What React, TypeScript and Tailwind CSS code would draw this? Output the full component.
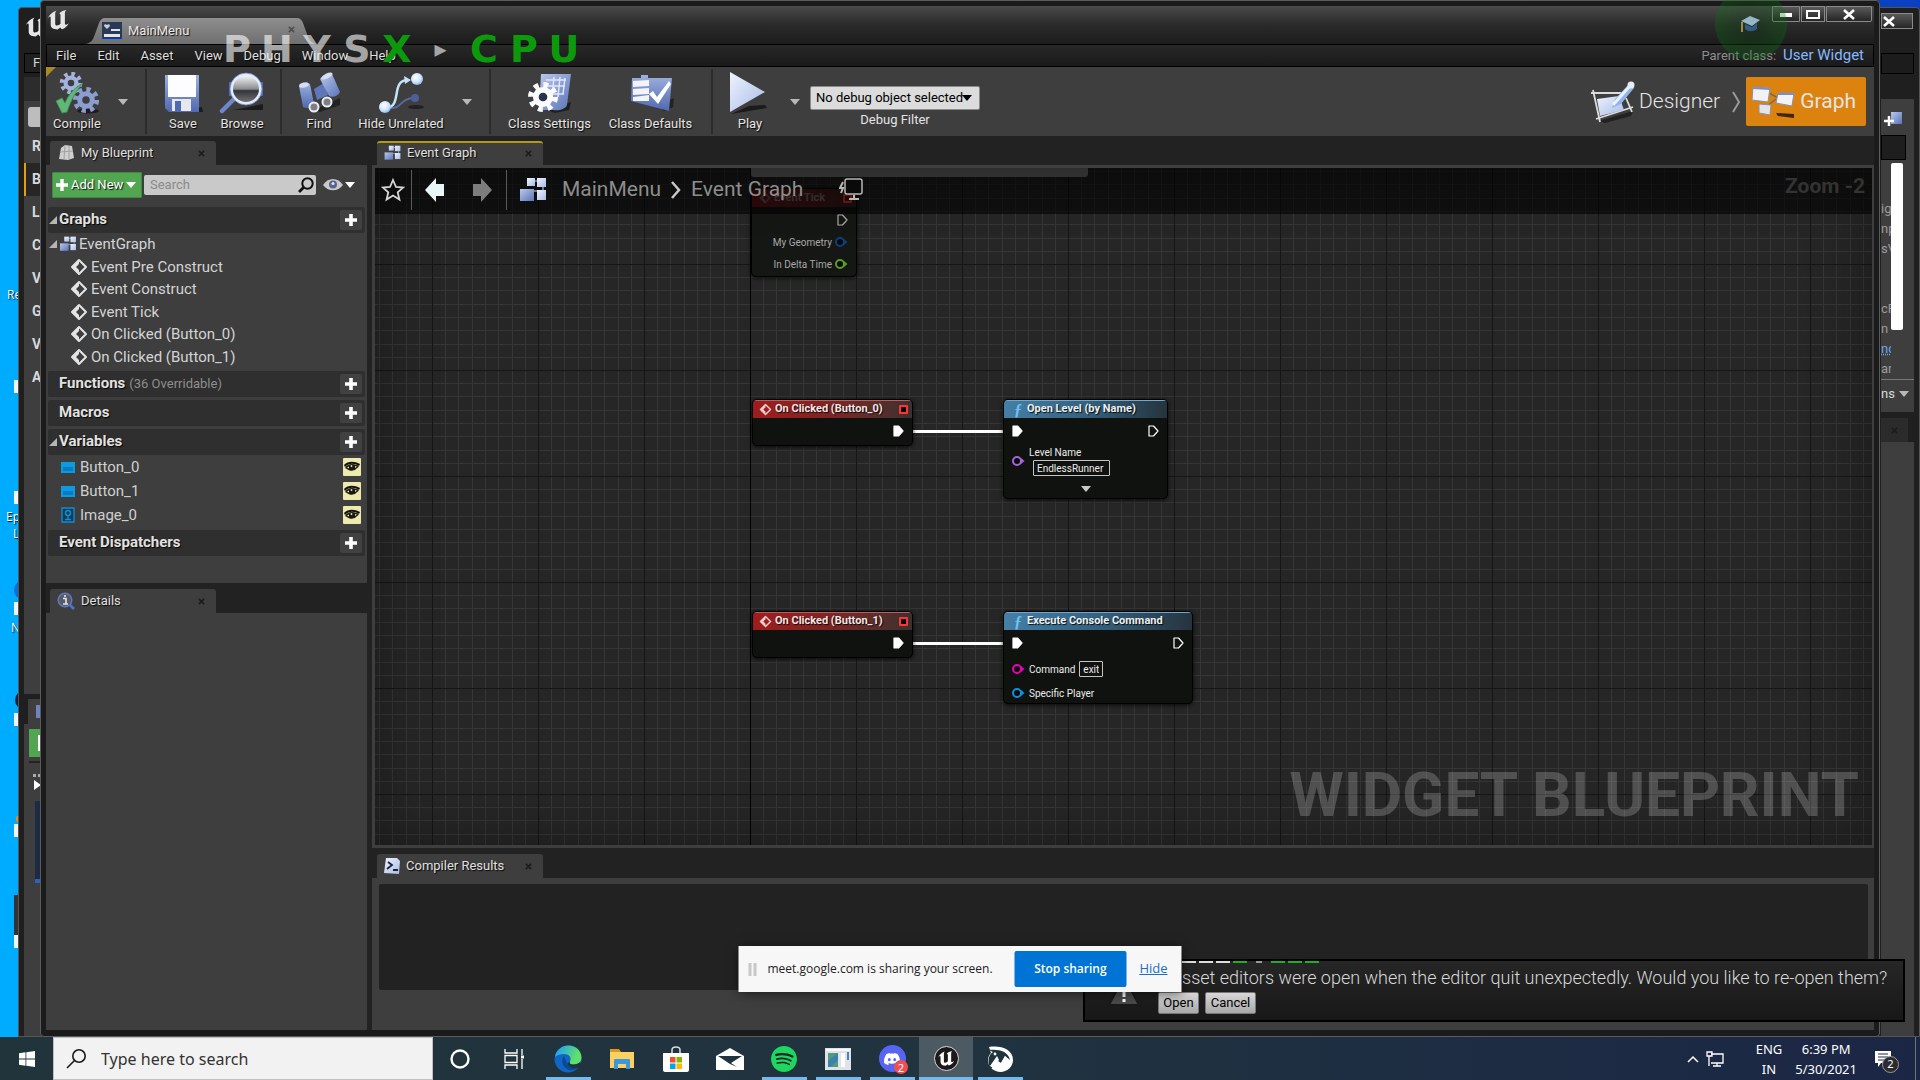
import React from "react";
import { SiDiscord, SiSpotify } from "react-icons/si";

const SHADOW = "[text-shadow:1px_1px_1px_rgba(0,0,0,0.9)]";

/* ---------- small shared pieces ---------- */

function UnrealU({ className }: { className: string }) {
  return (
    <svg viewBox="0 0 24 22" className={className} aria-hidden="true">
      <path
        d="M1 11C3 6 6 3 10.500 1.500C9.500 2.600 9.200 3.500 9.200 5v9.500c0 1.400.7 2 1.600 2 1.500 0 2.700-.7 3.700-1.700V6.200c0-1-.5-1.500-1.500-1.300C14.500 2.800 17 1.500 20.500 1c-1.200 1-1.600 1.800-1.600 3.200v10.300c0 .8.4 1.200 1.100 1.200.8 0 1.800-.6 2.900-1.700-1.600 3.300-4 5.500-7.100 6.300l-1.600-1.700-2.500 1.900C7 20.300 4.700 18.800 4.700 15.500V8.700c0-.8-.3-1.200-.9-1.200C2.900 7.500 2 8.900 1 11z"
        fill="currentColor"
      />
    </svg>
  );
}

function Gear({ cx, cy, r, fill, hole }: { cx: number; cy: number; r: number; fill: string; hole: string }) {
  const step = (2 * Math.PI * r) / 16;
  return (
    <g>
      <circle cx={cx} cy={cy} r={r} fill="none" stroke={fill} strokeWidth={r * 0.5} strokeDasharray={`${step} ${step}`} />
      <circle cx={cx} cy={cy} r={r * 0.84} fill={fill} />
      <circle cx={cx} cy={cy} r={r * 0.36} fill={hole} />
    </g>
  );
}

function Gradients() {
  return (
    <svg width="0" height="0" className="absolute" aria-hidden="true">
      <defs>
        <linearGradient id="blue" x1="0" y1="0" x2="1" y2="1">
          <stop offset="0" stopColor="#b9c8ec" />
          <stop offset="1" stopColor="#5b74b8" />
        </linearGradient>
        <linearGradient id="blue2" x1="0" y1="0" x2="0" y2="1">
          <stop offset="0" stopColor="#9db0e0" />
          <stop offset="1" stopColor="#5069b0" />
        </linearGradient>
        <linearGradient id="pale" x1="0" y1="0" x2="1" y2="1">
          <stop offset="0" stopColor="#eef3ff" />
          <stop offset="1" stopColor="#a9bce6" />
        </linearGradient>
        <linearGradient id="glass" x1="0" y1="0" x2="0" y2="1">
          <stop offset="0" stopColor="#ffffff" />
          <stop offset="0.5" stopColor="#8a8c90" />
          <stop offset="0.56" stopColor="#333437" />
          <stop offset="1" stopColor="#77797d" />
        </linearGradient>
        <radialGradient id="ball" cx="0.4" cy="0.35" r="0.7">
          <stop offset="0" stopColor="#ffffff" />
          <stop offset="0.6" stopColor="#cfe6fb" />
          <stop offset="1" stopColor="#7fb0e0" />
        </radialGradient>
      </defs>
    </svg>
  );
}

function Down({ className = "text-[#b8b8b8]" }: { className?: string }) {
  return (
    <svg viewBox="0 0 10 6" className={`h-1.5 w-2.5 shrink-0 ${className}`} aria-hidden="true">
      <path d="M0 0h10L5 6z" fill="currentColor" />
    </svg>
  );
}

function CloseX() {
  return (
    <svg viewBox="0 0 8 8" className="h-[7px] w-[7px]" aria-hidden="true">
      <path d="M1 1l6 6M7 1L1 7" stroke="#1c1c1c" strokeWidth="1.800" />
    </svg>
  );
}

function GraphIcon({ className }: { className: string }) {
  return (
    <svg viewBox="0 0 28 26" className={className} aria-hidden="true">
      <path d="M8 4h16v10H8" fill="none" stroke="#8d99bd" strokeWidth="1.500" />
      <rect x="8" y="1" width="8" height="8" fill="url(#pale)" />
      <rect x="18" y="1" width="9" height="9" fill="url(#pale)" />
      <rect x="1" y="12" width="14" height="12" fill="url(#blue)" />
      <rect x="18" y="13" width="9" height="10" fill="url(#pale)" />
    </svg>
  );
}

function Diamond({ className }: { className: string }) {
  return (
    <svg viewBox="0 0 18 18" className={className} aria-hidden="true">
      <path d="M9 2l7 7-7 7-7-7z" fill="none" stroke="currentColor" strokeWidth="2" strokeLinejoin="round" />
      <path d="M9 2v4L6 9l3 3v4L2 9z" fill="currentColor" />
    </svg>
  );
}

/* ---------- toolbar icons ---------- */

const compileIcon = (
  <svg viewBox="0 0 46 42" className="h-[42px] w-[46px]">
    <ellipse cx="34" cy="39" rx="11" ry="2.500" fill="#1c1c1c" />
    <Gear cx={17} cy={11} r={9} fill="#a3b3de" hole="#3e3e3e" />
    <Gear cx={32} cy={28} r={10.5} fill="#8c9dd0" hole="#3e3e3e" />
    <path d="M2 29l6-3 3 5C15 22 20 16 29 11c-7 8-12 17-16 29l-5 1z" fill="#5fb878" stroke="#3d8f56" strokeWidth="0.800" />
  </svg>
);
const saveIcon = (
  <svg viewBox="0 0 46 42" className="h-[42px] w-[46px]">
    <path d="M10 40l32-5 1 5z" fill="#1c1c1c" />
    <path d="M5 3h34v37H9l-4-4z" fill="url(#blue2)" />
    <path d="M8 3h28v22H8z" fill="#fdfdff" />
    <path d="M12 27h19v12H12z" fill="#e6e8ee" />
    <path d="M15 29h6v10h-6z" fill="#5069b0" />
  </svg>
);
const browseIcon = (
  <svg viewBox="0 0 46 42" className="h-[42px] w-[46px]">
    <path d="M14 38l30-6v6z" fill="#1c1c1c" />
    <path d="M10 10h34v14H10z" fill="#5069b0" />
    <path d="M15 27L3 39" stroke="#6d87cb" strokeWidth="4.500" strokeLinecap="round" />
    <circle cx="27" cy="17" r="14.500" fill="url(#glass)" stroke="#e4ecfb" strokeWidth="3" />
    <circle cx="27" cy="17" r="16" fill="none" stroke="#6f88c6" strokeWidth="0.800" />
  </svg>
);
const findIcon = (
  <svg viewBox="0 0 46 42" className="h-[42px] w-[46px]">
    <path d="M18 38l26-12v7l-20 7z" fill="#222" />
    <path d="M18 17l10-6 4 12-11 5z" fill="#6076ba" />
    <path d="M3 14c3-3 7-4 11-2l4 20c-2 4-8 5-11 3z" fill="url(#blue2)" />
    <path d="M24 7c3-4 7-6 12-5l8 18c-2 4-7 6-11 4z" fill="url(#blue)" />
    <ellipse cx="8" cy="13" rx="5" ry="2.500" fill="#d5def5" transform="rotate(-15 8 13)" />
    <ellipse cx="31" cy="4" rx="6" ry="2.500" fill="#d5def5" transform="rotate(-25 31 4)" />
    <circle cx="18" cy="35" r="4.500" fill="#7d7f86" stroke="#eceef2" strokeWidth="2" />
    <circle cx="31" cy="30" r="4.500" fill="#7d7f86" stroke="#eceef2" strokeWidth="2" />
  </svg>
);
const hideIcon = (
  <svg viewBox="0 0 46 42" className="h-[42px] w-[46px]">
    <ellipse cx="38" cy="35" rx="8" ry="2" fill="#222" />
    <path d="M8 36c18 2 12-9 27-10" fill="none" stroke="#54699f" strokeWidth="2" />
    <circle cx="37" cy="26" r="4" fill="#4a5f9c" />
    <path d="M8 36c17-1 4-28 22-28" fill="none" stroke="#c3e3f6" strokeWidth="2.500" />
    <path d="M26 4l7 4-6 4z" fill="#c3e3f6" />
    <circle cx="7" cy="35" r="6" fill="url(#ball)" />
    <circle cx="39" cy="7" r="6" fill="url(#ball)" />
  </svg>
);
const settingsIcon = (
  <svg viewBox="0 0 46 42" className="h-[42px] w-[46px]">
    <path d="M20 38l24-8-2 8-14 3z" fill="#1f1f1f" />
    <path d="M14 2h30l-4 31c-1 4-8 6-14 5H12z" fill="url(#blue)" />
    <path d="M19 8h20M18 14h20M24 22h13M27 5l-2 20M33 5l-2 20M38 6l-2 16" stroke="#dfe8fb" strokeWidth="1.500" fill="none" />
    <Gear cx={16} cy={25} r={12} fill="#fbfbfd" hole="#26334f" />
  </svg>
);
const defaultsIcon = (
  <svg viewBox="0 0 46 42" className="h-[42px] w-[46px]">
    <path d="M30 34l16-8-1 9-9 4z" fill="#222" />
    <path d="M4 6h9V3h7v3h24l-3 33L3 29z" fill="url(#blue2)" />
    <path d="M5 9l16-1v6L5 15zM5 17l16-1v6L5 23zM5 25l16-2v6L5 29z" fill="#f3f4f8" />
    <path d="M21 22l4-3 4 6L41 9l2 3-13 20z" fill="#fff" />
  </svg>
);
const playIcon = (
  <svg viewBox="0 0 46 42" className="h-[42px] w-[46px]">
    <path d="M4 42l36-6-2-3-16 1z" fill="#1b1b1b" />
    <path d="M3 0l35 20L3 40z" fill="url(#pale)" />
  </svg>
);

function Tool({ label, icon, width }: { label: string; icon: React.ReactNode; width: string }) {
  return (
    <button className={`flex flex-col items-center pt-[5px] ${width}`}>
      {icon}
      <span className={`mt-0.5 text-[13px] leading-4 whitespace-nowrap ${SHADOW}`}>{label}</span>
    </button>
  );
}

function ArrowButton({ label, width }: { label: string; width: string }) {
  return (
    <button aria-label={label} className={`flex items-center justify-center ${width}`}>
      <Down />
    </button>
  );
}

function Separator() {
  return <div className="my-0.5 w-0.5 shrink-0 bg-[#2c2c2c]" />;
}

function Toolbar() {
  return (
    <div className="relative flex h-[69px] shrink-0 items-stretch bg-[#3e3e3e] text-[#e4e4e4]">
      <svg viewBox="0 0 10 10" className="absolute top-0 left-0 h-[10px] w-[10px]" aria-hidden="true">
        <path d="M0 0h10L0 10z" fill="#ab8a22" />
      </svg>
      <Tool label="Compile" icon={compileIcon} width="w-[62px]" />
      <ArrowButton label="Compile options" width="w-[29px]" />
      <div className="w-2" />
      <Separator />
      <div className="w-[7px]" />
      <Tool label="Save" icon={saveIcon} width="w-[58px]" />
      <Tool label="Browse" icon={browseIcon} width="w-[60px]" />
      <div className="w-2" />
      <Separator />
      <div className="w-[9px]" />
      <Tool label="Find" icon={findIcon} width="w-[56px]" />
      <Tool label="Hide Unrelated" icon={hideIcon} width="w-[108px]" />
      <ArrowButton label="Hide Unrelated options" width="w-[24px]" />
      <div className="w-[10px]" />
      <Separator />
      <div className="w-2" />
      <Tool label="Class Settings" icon={settingsIcon} width="w-[101px]" />
      <Tool label="Class Defaults" icon={defaultsIcon} width="w-[101px]" />
      <div className="w-[10px]" />
      <Separator />
      <div className="w-2" />
      <Tool label="Play" icon={playIcon} width="w-[58px]" />
      <ArrowButton label="Play options" width="w-[31px]" />
      <div className="flex flex-col items-center pt-[19px]">
        <div className="relative">
          <select
            aria-label="Debug Filter"
            className="block h-6 w-[170px] appearance-none rounded-[2px] border border-[#8a8a8a] bg-[#dcdcdc] pl-[5px] text-[13px] leading-5 text-black"
          >
            <option>No debug object selected</option>
          </select>
          <div className="pointer-events-none absolute top-[9px] right-2">
            <Down className="text-black" />
          </div>
        </div>
        <span className="mt-0.5 text-[13px] leading-4">Debug Filter</span>
      </div>
      <div className="flex-1" />
      <div className="flex items-center pr-2">
        <button className="flex items-center gap-1 text-[21px] font-light">
          <svg viewBox="0 0 46 42" className="h-[42px] w-[46px]" aria-hidden="true">
            <path d="M10 40l34-10-2 5-26 7z" fill="#222" />
            <path d="M2 12h31M4 9l7 32M7 38l37-12M37 17l6 14" stroke="#dcdcdc" strokeWidth="1.800" fill="none" />
            <path d="M8 18l22-3 5 14-24 6z" fill="url(#pale)" />
            <path d="M23 27l3-9L40 3l5 4-13 16z" fill="#8fb3ea" />
            <path d="M24 24l16-18" stroke="#e9f2ff" strokeWidth="3" />
            <circle cx="42" cy="4" r="3.500" fill="#e8edf5" />
          </svg>
          <span>Designer</span>
        </button>
        <svg viewBox="0 0 10 22" className="mr-1 ml-3 h-[22px] w-[10px]" aria-hidden="true">
          <path d="M1 1l6 10-6 10" fill="none" stroke="#9a9a9a" strokeWidth="2" />
        </svg>
        <button className="flex h-[49px] items-center gap-1 rounded-[2px] bg-[#dc830f] pr-2.5 pl-1 text-[21px]">
          <svg viewBox="0 0 46 34" className="h-[34px] w-[46px]" aria-hidden="true">
            <path d="M26 28l18 1v4l-16-2z" fill="#3f2604" />
            <path d="M19 8l9 5M16 22l10-8" stroke="#7a6a55" strokeWidth="1.500" />
            <path d="M3 2l17 1-2 14L2 15z" fill="#f2f1f3" stroke="#8d8ea0" />
            <path d="M28 8h16l-2 13-16-3z" fill="#f2f1f3" stroke="#8d8ea0" />
            <path d="M9 19l12 1-1 10-11-2z" fill="#e5e4ea" stroke="#8d8ea0" />
            <path d="M3 2l17 1v2L3 4zM28 8h16v2H28z" fill="#7b8fc4" />
          </svg>
          <span>Graph</span>
        </button>
      </div>
    </div>
  );
}

/* ---------- tabs and left panel ---------- */

function Tab({ label, icon, active = false }: { label: string; icon: React.ReactNode; active?: boolean }) {
  return (
    <div
      className={`flex h-6 w-[166px] items-center rounded-t-[3px] border-t-2 bg-[#3e3e3e] pb-0.5 pl-[7px] text-[13px] text-[#e0e0e0] ${
        active ? "border-[#b39a12]" : "border-[#3e3e3e]"
      }`}
    >
      {icon}
      <span className={`ml-1.5 flex-1 ${SHADOW}`}>{label}</span>
      <button aria-label={`Close ${label}`} className="mr-[11px]">
        <CloseX />
      </button>
    </div>
  );
}

function Triangle() {
  return (
    <svg viewBox="0 0 8 8" className="h-2 w-2 shrink-0" aria-hidden="true">
      <path d="M8 0v8H0z" fill="#b5b5b5" />
    </svg>
  );
}

function SectionHeader({ title, note, open = false }: { title: string; note?: string; open?: boolean }) {
  return (
    <div className="flex h-[26px] items-center rounded-[2px] bg-[#2f2f2f] pr-[3px] pl-px">
      <div className="flex w-[10px]">{open && <Triangle />}</div>
      <h2 className={`pb-0.5 text-[15px] leading-5 font-bold text-[#e2e2e2] ${SHADOW}`}>{title}</h2>
      {note && <span className="ml-1 text-[13px] text-[#8e8e8e]">{note}</span>}
      <button
        aria-label={`Add to ${title}`}
        className="ml-auto flex h-5 w-[22px] items-center justify-center rounded-[2px] bg-[#414141]"
      >
        <svg viewBox="0 0 12 12" className="h-3 w-3" aria-hidden="true">
          <path d="M6 0v12M0 6h12" stroke="#fff" strokeWidth="3.600" />
        </svg>
      </button>
    </div>
  );
}

const events = ["Event Pre Construct", "Event Construct", "Event Tick", "On Clicked (Button_0)", "On Clicked (Button_1)"];

function Variable({ name, image = false }: { name: string; image?: boolean }) {
  return (
    <div className="flex h-6 items-center pr-1 pl-[13px] text-[15px] text-[#d0d0d0]">
      {image ? (
        <svg viewBox="0 0 14 16" className="h-4 w-3.5" aria-hidden="true">
          <path d="M1 1h12v14H1z" fill="#123c54" stroke="#0f8fd6" strokeWidth="1.300" />
          <circle cx="7" cy="6" r="2.500" fill="none" stroke="#0f8fd6" strokeWidth="1.500" />
          <path d="M7 8v4M4 12.500h6" stroke="#0f8fd6" strokeWidth="1.300" />
        </svg>
      ) : (
        <svg viewBox="0 0 14 11" className="h-[11px] w-3.5" aria-hidden="true">
          <path d="M0 0h14v11H0z" fill="#0b9be3" />
          <path d="M2 5h10v4H2z" fill="#077cbf" />
        </svg>
      )}
      <span className="ml-[5px] flex-1">{name}</span>
      <button
        aria-label={`Toggle visibility of ${name}`}
        className="flex h-[18px] w-[18px] items-center justify-center rounded-[1px] bg-[#eeeaae]"
      >
        <svg viewBox="0 0 16 12" className="h-3 w-4" aria-hidden="true">
          <path d="M0 4C4 0 10 0 16 3l-1 2C10 2 5 2 1 6z" fill="#111" />
          <path d="M1 7c2-3 4-4 7-4s5 1 7 2c-1 1-1 2-2 2-2 3-7 4-10 1z" fill="#1a1a12" />
          <path d="M3 6.500l2-1v2zM11 5l2 .5-2 1.500z" fill="#eeeaae" />
          <circle cx="7.500" cy="5" r="0.900" fill="#eeeaae" />
        </svg>
      </button>
    </div>
  );
}

function LeftPanel() {
  return (
    <aside className="flex w-[321px] shrink-0 flex-col">
      <div className="mt-[5px] pl-1">
        <Tab
          label="My Blueprint"
          icon={
            <svg viewBox="0 0 18 18" className="h-[18px] w-[18px]" aria-hidden="true">
              <path d="M4 4l4-3 7 1 2 12-6 2-9-1z" fill="#cfcfcf" />
              <path d="M8 1l-1 14M12 2v13M3 8l13-1" stroke="#a2a2a2" />
            </svg>
          }
        />
      </div>
      <div className="h-[418px] bg-[#3e3e3e]">
        <div className="flex items-center pt-[7px] pl-1.5">
          <button className="flex h-[26px] w-[90px] items-center gap-[3px] rounded-[1px] border border-[#3f8a3f] bg-[#52a652] pl-[3px] text-[13px] text-white">
            <svg viewBox="0 0 12 12" className="h-3 w-3 shrink-0" aria-hidden="true">
              <path d="M6 0v12M0 6h12" stroke="#fff" strokeWidth="3.400" />
            </svg>
            <span className={`whitespace-nowrap ${SHADOW}`}>Add New</span>
            <Down className="text-white" />
          </button>
          <label className="ml-0.5 flex h-5 w-[172px] items-center rounded-[2px] bg-[#c9c9c9] pr-0.5 pl-1.5">
            <input
              aria-label="Search"
              placeholder="Search"
              className="w-0 flex-1 bg-transparent text-[13px] text-black outline-none placeholder:text-[#8a8a8a]"
            />
            <svg viewBox="0 0 16 16" className="h-4 w-4" aria-hidden="true">
              <circle cx="9.500" cy="6.500" r="5.200" fill="none" stroke="#111" strokeWidth="2" />
              <path d="M5.500 10.500L1 15" stroke="#111" strokeWidth="2.800" />
            </svg>
          </label>
          <button aria-label="View options" className="ml-[7px] flex items-center gap-0.5">
            <svg viewBox="0 0 20 12" className="h-3 w-5" aria-hidden="true">
              <path d="M0 6c5-8 15-8 20 0-5 7-15 7-20 0z" fill="#c9c9c9" />
              <circle cx="10" cy="5.500" r="4" fill="#56658f" />
              <circle cx="10" cy="4.500" r="1.500" fill="#dfe6f7" />
            </svg>
            <Down className="text-white" />
          </button>
        </div>
        <div className="pt-[9px] pr-0.5 pl-0.5">
          <SectionHeader title="Graphs" open />
          <ul className="grid h-[138px] auto-rows-fr pb-[3px] text-[15px] text-[#d4d4d4]">
            <li className="flex items-center pl-px">
              <Triangle />
              <GraphIcon className="ml-0.5 h-4 w-[18px]" />
              <span className="ml-0.5">EventGraph</span>
            </li>
            {events.map((e) => (
              <li key={e} className="flex items-center pl-[22px]">
                <Diamond className="h-[18px] w-[18px] text-[#e4e4e4]" />
                <span className="ml-[3px]">{e}</span>
              </li>
            ))}
          </ul>
          <div className="flex flex-col gap-[3px]">
            <SectionHeader title="Functions" note="(36 Overridable)" />
            <SectionHeader title="Macros" />
            <SectionHeader title="Variables" open />
          </div>
          <div className="pb-[3px]">
            <Variable name="Button_0" />
            <Variable name="Button_1" />
            <Variable name="Image_0" image />
          </div>
          <SectionHeader title="Event Dispatchers" />
        </div>
      </div>
      <div className="mt-1.5 pl-1">
        <Tab
          label="Details"
          icon={
            <svg viewBox="0 0 18 18" className="h-[18px] w-[18px]" aria-hidden="true">
              <path d="M11 11l6 6" stroke="#4f74c9" strokeWidth="2.500" />
              <circle cx="8" cy="8" r="6.800" fill="#555a66" stroke="#5c79c2" strokeWidth="1.500" />
              <path d="M6 6.500h3V12M6 12h5" stroke="#e5e5e5" strokeWidth="1.600" fill="none" />
              <circle cx="8" cy="4" r="1.100" fill="#e5e5e5" />
            </svg>
          }
        />
      </div>
      <div className="flex-1 bg-[#3e3e3e]" />
    </aside>
  );
}

/* ---------- graph canvas ---------- */

const minor = [13, 26, 40, 53, 66, 80, 93];

function Grid() {
  return (
    <svg className="absolute inset-0 h-full w-full" aria-hidden="true">
      <defs>
        <pattern id="grid" x="57" y="96" width="106" height="106" patternUnits="userSpaceOnUse">
          <rect width="106" height="106" fill="#262626" />
          {minor.map((m) => (
            <g key={m} fill="#353535">
              <rect x={m} y="0" width="1" height="106" />
              <rect x="0" y={m} width="106" height="1" />
            </g>
          ))}
          <rect width="1" height="106" fill="#161616" />
          <rect width="106" height="1" fill="#161616" />
        </pattern>
      </defs>
      <rect width="100%" height="100%" fill="url(#grid)" />
      <rect x="375" y="0" width="1" height="100%" fill="#000" />
      <rect x="536" y="262" width="94" height="3" fill="#fff" />
      <rect x="536" y="474" width="94" height="3" fill="#fff" />
    </svg>
  );
}

function ExecPin({ filled = false }: { filled?: boolean }) {
  return (
    <svg viewBox="0 0 11 12" className="h-3 w-[11px] shrink-0" aria-hidden="true">
      <path
        d="M1 1h4.500L10 6l-4.500 5H1z"
        fill={filled ? "#fff" : "none"}
        stroke="currentColor"
        strokeWidth="1.200"
        strokeLinejoin="round"
      />
    </svg>
  );
}

function DataPin({ className }: { className: string }) {
  return (
    <svg viewBox="0 0 14 12" className={`h-3 w-3.5 shrink-0 ${className}`} aria-hidden="true">
      <circle cx="6" cy="6" r="4" fill="#0a0a0a" stroke="currentColor" strokeWidth="2" />
      <path d="M10 3L13.500 6 10 9z" fill="currentColor" />
    </svg>
  );
}

function EventNode({ title, place }: { title: string; place: string }) {
  return (
    <div
      className={`absolute h-[47px] w-[161px] overflow-hidden rounded-[5px] border border-black bg-[#10120f] shadow-[0_1px_4px_rgba(0,0,0,0.8)] ${place}`}
    >
      <div className="flex h-[18px] items-center border-t border-[#b86060] bg-linear-to-r from-[#a01c1c] via-[#7c2424] to-[#3a3030] pr-1 pl-1.5">
        <Diamond className="h-[13px] w-[13px] text-[#eecccc]" />
        <span className={`ml-[3px] text-[11px] font-bold whitespace-nowrap text-[#f1e6e6] ${SHADOW}`}>{title}</span>
        <span className="ml-auto h-[9px] w-[9px] rounded-[1px] border-2 border-[#ff3434] bg-black" />
      </div>
      <div className="flex justify-end pt-[7px] pr-2 text-white">
        <ExecPin filled />
      </div>
    </div>
  );
}

function FunctionNode({ title, place, children }: { title: string; place: string; children: React.ReactNode }) {
  return (
    <div
      className={`absolute overflow-hidden rounded-[5px] border border-black bg-[#10120f] text-[10px] text-[#ececec] shadow-[0_1px_4px_rgba(0,0,0,0.8)] ${place}`}
    >
      <div className="flex h-[18px] items-center border-t border-[#6fa9cf] bg-linear-to-r from-[#457fa6] via-[#35617f] to-[#25343e] pl-2.5">
        <span className="w-[13px] font-['Liberation_Serif',serif] text-[16px] leading-4 font-bold text-[#6cc0f5] italic">ƒ</span>
        <span className={`text-[11px] font-bold whitespace-nowrap text-[#eaf0f4] ${SHADOW}`}>{title}</span>
      </div>
      <div className="flex justify-between pt-[7px] pr-2 pl-2 text-white">
        <ExecPin filled />
        <ExecPin />
      </div>
      {children}
    </div>
  );
}

function GraphCanvas() {
  return (
    <div className="relative flex-1 overflow-hidden">
      <Grid />
      <div className="absolute top-0 left-[376px] h-[9px] w-[337px] rounded-b-[3px] bg-[#8c8c8c]" />
      <div className="absolute top-5 left-[376px] h-[89px] w-[106px] overflow-hidden rounded-[5px] border border-black bg-[#151715] text-[10px] text-[#a8a8a8] shadow-[0_1px_4px_rgba(0,0,0,0.8)]">
        <div className="flex h-[18px] items-center bg-linear-to-r from-[#701515] to-[#402020] pr-1 pl-[7px]">
          <Diamond className="h-3 w-3 text-[#776666]" />
          <span className="ml-[3px] text-[11px] font-bold text-[#887777]">Event Tick</span>
          <span className="ml-auto h-[9px] w-[9px] rounded-[1px] border-2 border-[#ff3434]" />
        </div>
        <div className="flex flex-col items-end pt-[7px] pr-2">
          <ExecPin />
          <div className="mt-[5px] flex h-[22px] items-center gap-0.5">
            My Geometry <DataPin className="text-[#0d3f78]" />
          </div>
          <div className="flex h-[22px] items-center gap-0.5">
            In Delta Time <DataPin className="text-[#5d9a2c]" />
          </div>
        </div>
      </div>
      <EventNode title="On Clicked (Button_0)" place="left-[377px] top-[231px]" />
      <FunctionNode title="Open Level (by Name)" place="left-[628px] top-[231px] w-[165px] h-[100px]">
        <div className="flex items-center gap-1 pt-[9px] pl-[7px]">
          <DataPin className="text-[#a566dc]" />
          <div>
            <div className="leading-[14px]">Level Name</div>
            <input
              aria-label="Level Name"
              defaultValue="EndlessRunner"
              className="ml-1 block h-4 w-[77px] rounded-[1px] border border-[#c4c4c4] bg-transparent px-[3px] text-[10px] leading-3"
            />
          </div>
        </div>
        <div className="flex justify-center pt-2.5">
          <Down className="text-[#c8c8c8]" />
        </div>
      </FunctionNode>
      <EventNode title="On Clicked (Button_1)" place="left-[377px] top-[443px]" />
      <FunctionNode title="Execute Console Command" place="left-[628px] top-[443px] w-[190px] h-[93px]">
        <div className="mt-2 flex h-6 items-center gap-1 pl-[7px]">
          <DataPin className="text-[#ea00b4]" />
          <label htmlFor="command">Command</label>
          <input
            id="command"
            defaultValue="exit"
            className="h-4 w-6 rounded-[1px] border border-[#c4c4c4] bg-transparent px-[3px] text-[10px] leading-3"
          />
        </div>
        <div className="flex h-6 items-center gap-1 pl-[7px]">
          <DataPin className="text-[#0a93dd]" />
          <span>Specific Player</span>
        </div>
      </FunctionNode>
      <div className="pointer-events-none absolute inset-0 shadow-[inset_0_0_60px_rgba(0,0,0,0.35)]" />

      <div className="relative flex h-[46px] items-center bg-black/60 pb-0.5 text-[21px] text-[#8d8d8d]">
        <button aria-label="Favourite" className="flex w-9 justify-center">
          <svg viewBox="0 0 24 24" className="h-6 w-6" aria-hidden="true">
            <path d="M12 2l3 7 7 .6-5.300 4.700 1.700 7.200L12 17.600 5.600 21.500l1.700-7.200L2 9.600 9 9z" fill="none" stroke="#d6d6d6" strokeWidth="1.800" />
          </svg>
        </button>
        <div className="h-10 w-px bg-[#5a5a5a]" />
        <button aria-label="Back" className="flex w-[46px] justify-center">
          <svg viewBox="0 0 20 24" className="h-6 w-5" aria-hidden="true">
            <path d="M0 12L11 0v6h8v12h-8v6z" fill="#e9f6f8" />
          </svg>
        </button>
        <button aria-label="Forward" className="flex w-[48px] justify-center">
          <svg viewBox="0 0 20 24" className="h-6 w-5" aria-hidden="true">
            <path d="M20 12L9 0v6H1v12h8v6z" fill="#7d7d7d" />
          </svg>
        </button>
        <div className="h-10 w-px bg-[#5a5a5a]" />
        <GraphIcon className="ml-3 h-[26px] w-7" />
        <span className="ml-[15px]">MainMenu</span>
        <svg viewBox="0 0 10 18" className="mx-2.5 h-[18px] w-2.5" aria-hidden="true">
          <path d="M1 1l7 8-7 8" fill="none" stroke="#c8c8c8" strokeWidth="2.500" />
        </svg>
        <span>Event Graph</span>
        <svg viewBox="0 0 24 24" className="ml-[36px] h-6 w-6" aria-hidden="true">
          <rect x="6" y="1" width="17" height="15" rx="2" fill="#0a0a0a" stroke="#b8b8b8" strokeWidth="1.500" />
          <path d="M10 21h10M15 17v4M4 4L1 10h3l-2 5" stroke="#b8b8b8" strokeWidth="2" fill="none" />
        </svg>
        <span className="mr-[7px] ml-auto pb-1.5 font-bold text-[#333]">Zoom -2</span>
      </div>
      <div className="pointer-events-none absolute right-[13px] bottom-[12px] text-[62px] leading-[76px] font-bold text-white/20">
        WIDGET BLUEPRINT
      </div>
    </div>
  );
}

function CenterPanel() {
  return (
    <main className="flex min-w-0 flex-1 flex-col">
      <div className="mt-[5px] pl-[5px]">
        <Tab label="Event Graph" active icon={<GraphIcon className="h-4 w-[17px]" />} />
      </div>
      <div className="flex min-h-0 flex-1 flex-col border-[3px] border-r-2 border-[#3e3e3e]">
        <GraphCanvas />
      </div>
      <div className="mt-1.5 pl-[5px]">
        <Tab
          label="Compiler Results"
          icon={
            <svg viewBox="0 0 16 16" className="h-4 w-4" aria-hidden="true">
              <path d="M2 0h11l3 3-1 13L0 15z" fill="url(#pale)" />
              <path d="M4 4l4 3-5 4M9 12h5" stroke="#1c2436" strokeWidth="1.800" fill="none" />
            </svg>
          }
        />
      </div>
      <div className="h-[152px] shrink-0 bg-[#3e3e3e] pt-1.5 pr-1.5 pl-[7px]">
        <div className="h-[106px] rounded-[2px] bg-[#222]" />
      </div>
    </main>
  );
}

/* ---------- windows ---------- */

function WindowButtons() {
  const base = "flex h-full items-center justify-center border border-[#8a8a8a] bg-linear-to-b from-[#5a5a5a] to-[#262626]";
  return (
    <div className="mr-0.5 flex h-4 gap-px">
      <button aria-label="Minimize" className={`w-7 rounded-bl-[2px] ${base}`}>
        <span className="mt-0.5 h-1 w-3 bg-white" />
      </button>
      <button aria-label="Maximize" className={`w-6 ${base}`}>
        <span className="h-[9px] w-3.5 border-2 border-white" />
      </button>
      <button aria-label="Close" className={`w-[46px] rounded-br-[2px] ${base}`}>
        <svg viewBox="0 0 12 11" className="h-[11px] w-3" aria-hidden="true">
          <path d="M1 1l10 9M11 1L1 10" stroke="#fff" strokeWidth="2.600" />
        </svg>
      </button>
    </div>
  );
}

function FrontWindow() {
  return (
    <div className="absolute top-0 right-10 bottom-0 left-10 flex flex-col overflow-hidden rounded-[4px] border border-[#5c5c5c] bg-[#1b1b1b] px-[5px] pt-[5px] pb-1.5">
      <header className="flex h-[38px] shrink-0 items-start bg-linear-to-b from-[#4a4a4a] via-[#2a2a2a] to-[#1c1c1c]">
        <UnrealU className="mt-[3px] h-[22px] w-6 text-[#e6e6e6]" />
        <div className="relative mt-3 ml-4 flex h-[26px] w-[230px] items-center pl-4">
          <svg viewBox="0 0 230 26" className="absolute inset-0 h-full w-full" aria-hidden="true">
            <defs>
              <linearGradient id="tab" x1="0" y1="0" x2="0" y2="1">
                <stop offset="0" stopColor="#8e8e8e" />
                <stop offset="1" stopColor="#6f6f6f" />
              </linearGradient>
            </defs>
            <path d="M0 26c5-1 7-4 9-10l4-11c1-3 3-5 6-5h192c3 0 5 2 6 5l4 11c2 6 4 9 9 10z" fill="url(#tab)" />
          </svg>
          <svg viewBox="0 0 20 18" className="relative h-[18px] w-5" aria-hidden="true">
            <path d="M0 0h20v17H0z" fill="#2a3a54" />
            <path d="M0 17h20v1H0z" fill="#2f7bff" />
            <path d="M5 7L2 4c0-2 2-2 3-1 1-1 3-1 3 1z" fill="#c9cdd6" />
            <path d="M9 7h9v2H9zM2 12h16v3H2z" fill="#e0e4ec" />
          </svg>
          <span className={`relative ml-1.5 text-[13px] text-[#e8e8e8] ${SHADOW}`}>MainMenu</span>
          <button aria-label="Close MainMenu" className="absolute top-2 right-[21px] opacity-50">
            <CloseX />
          </button>
        </div>
        <div className="flex-1" />
        <svg viewBox="0 0 20 18" className="mt-[9px] mr-[12px] h-[18px] w-5" aria-hidden="true">
          <path d="M10 1l10 4-8 6L1 6z" fill="#b5cdf0" />
          <path d="M5 9v5c3 3 8 3 12 0V8l-5 4z" fill="#3d5f9a" />
          <path d="M2 7v10" stroke="#c2935a" strokeWidth="2" />
        </svg>
        <WindowButtons />
      </header>
      <nav className="flex h-[23px] shrink-0 items-center gap-[21px] border border-black bg-linear-to-b from-[#282828] to-[#1a1a1a] pr-[9px] pl-[9px] text-[13px] text-[#dedede]">
        {["File", "Edit", "Asset", "View", "Debug", "Window", "Help"].map((m) => (
          <button key={m} className={SHADOW}>
            {m}
          </button>
        ))}
        <div className="ml-auto flex items-baseline gap-[7px]">
          <span className="text-[13px] text-[#8c8c8c]">Parent class:</span>
          <a href="#user-widget" className="text-[15px] text-[#86b9ff]">
            User Widget
          </a>
        </div>
      </nav>
      <div className="flex min-h-0 flex-1 flex-col bg-[#222]">
        <Toolbar />
        <div className="flex min-h-0 flex-1 gap-[5px]">
          <LeftPanel />
          <CenterPanel />
        </div>
      </div>
    </div>
  );
}

const sideLetters = ["R", "B", "L", "C", "V", "G", "V", "A"];
const sideWords = ["ig", "np", "sV"];

function BackWindow() {
  return (
    <div className="absolute top-[7px] right-0 bottom-0 left-[18px] flex justify-between overflow-hidden rounded-t-[4px] border border-[#555] bg-[#1f1f1f] text-[#d8d8d8]">
      <div className="flex w-[22px] flex-col overflow-hidden pl-[5px]">
        <UnrealU className="mt-2 h-[22px] w-6 shrink-0 text-[#e6e6e6]" />
        <div className="mt-[15px] flex h-5 shrink-0 items-center border border-black pl-2 text-[13px]">F</div>
        <div className="mt-1 h-6 shrink-0 bg-[#2c2c2c]" />
        <div className="flex h-[593px] w-6 shrink-0 flex-col bg-[#3e3e3e]">
          <div className="mt-1.5 mb-[3px] ml-1 h-5 w-6 shrink-0 rounded-[3px] bg-[#bdbdbd]" />
          {sideLetters.map((l, i) => (
            <div
              key={i}
              className={`flex h-[33px] shrink-0 items-center border-l-2 pl-1.5 text-[14px] font-bold ${
                l === "B" ? "border-[#e0a010] bg-[#262626]" : "border-transparent"
              }`}
            >
              {l}
            </div>
          ))}
        </div>
        <div className="mt-[5px] ml-1 flex h-[25px] w-6 shrink-0 items-center bg-[#3e3e3e] pl-2">
          <div className="h-[13px] w-4 shrink-0 bg-[#6f83bd]" />
        </div>
        <div className="flex-1 bg-[#3e3e3e] pt-[5px] pl-[5px]">
          <div className="flex h-7 w-6 items-center bg-[#52a652] pl-[9px]">
            <div className="h-4 w-1 bg-white" />
          </div>
          <div className="mt-1 h-0.5 w-6 bg-[#222]" />
          <svg viewBox="0 0 8 18" className="mt-2.5 ml-1 h-[18px] w-2" aria-hidden="true">
            <path d="M0 1h3v3H0zM5 1h3v3H5z" fill="#aaa" />
            <path d="M1 7l7 5-7 5z" fill="#fff" />
          </svg>
          <div className="mt-2.5 ml-1.5 h-[82px] w-6 border-b-4 border-[#2f5fc4] bg-[#1d2a44]" />
        </div>
      </div>
      <div className="flex w-[38px] flex-col overflow-hidden pr-[5px]">
        <div className="mt-[5px] flex h-4 w-8 items-center justify-center self-start border border-[#8a8a8a] bg-linear-to-b from-[#5a5a5a] to-[#262626]">
          <svg viewBox="0 0 12 11" className="mr-4 h-[11px] w-3" aria-hidden="true">
            <path d="M1 1l10 9M11 1L1 10" stroke="#fff" strokeWidth="2.600" />
          </svg>
        </div>
        <div className="mt-[24px] h-[21px] border border-black bg-[#1c1c1c]" />
        <div className="mt-[25px] h-[313px] shrink-0 bg-[#3e3e3e] pt-3">
          <svg viewBox="0 0 20 16" className="ml-0.5 h-4 w-5" aria-hidden="true">
            <path d="M8 1h11v12H8z" fill="url(#blue)" />
            <path d="M6 5v10M1 10h10" stroke="#fff" strokeWidth="2.500" />
          </svg>
          <div className="mt-2 mr-2 h-[25px] border border-black bg-[#1e1e1e]" />
          <div className="mt-[3px] flex">
            <div className="w-2.5 overflow-hidden pt-[36px] text-[13px] leading-5 text-[#9a9a9a]">
              {sideWords.map((w) => (
                <div key={w}>{w}</div>
              ))}
              <div className="mt-10">cF</div>
              <div>n</div>
              <div className="text-[#6ea6ee] underline decoration-dotted">nc</div>
              <div className="h-4">ar</div>
            </div>
            <div className="h-[167px] w-3 rounded-[2px] bg-white" />
          </div>
          <div className="mt-1 flex items-center gap-1 border-t border-[#777] pt-1 text-[13px]">
            ns <Down />
          </div>
        </div>
        <div className="mt-1.5 mr-1.5 flex h-6 shrink-0 items-center justify-center bg-[#2b2b2b]">
          <CloseX />
        </div>
        <div className="flex-1 bg-[#3e3e3e]" />
      </div>
    </div>
  );
}

function Desktop() {
  return (
    <div className="absolute inset-0 bg-linear-to-r from-[#00acff] from-5% to-[#0a3fc0] font-['Open_Sans',sans-serif] text-[12px] text-white">
      <span className={`absolute top-[286px] left-[7px] ${SHADOW}`}>Re</span>
      <span className={`absolute top-[508px] left-[6px] ${SHADOW}`}>Ep</span>
      <span className={`absolute top-[525px] left-[13px] ${SHADOW}`}>L</span>
      <span className={`absolute top-[619px] left-[11px] ${SHADOW}`}>N</span>
      <div className="absolute top-[380px] left-[14px] h-[13px] w-3 bg-[#f4f4f4]" />
      <div className="absolute top-[491px] left-[14px] h-[13px] w-3 bg-[#f4f4f4]" />
      <div className="absolute top-[580px] left-[14px] h-5 w-3 rounded-l-full bg-[#0a6fd0]" />
      <div className="absolute top-[602px] left-[14px] h-[13px] w-3 bg-[#f4f4f4]" />
      <div className="absolute top-[713px] left-[14px] h-[13px] w-3 bg-[#f4f4f4]" />
      <div className="absolute top-[690px] left-[15px] h-5 w-3 rounded-l-full bg-[#12233f]" />
      <div className="absolute top-[815px] left-[16px] h-2 w-3 rounded-l-full bg-[#f08a1c]" />
      <div className="absolute top-[824px] left-[14px] h-[13px] w-3 bg-[#f4f4f4]" />
      <div className="absolute top-[895px] left-[14px] h-10 w-3 bg-[#333]" />
      <div className="absolute top-[935px] left-[14px] h-[13px] w-3 bg-[#f4f4f4]" />
    </div>
  );
}

/* ---------- overlays ---------- */

function Notification() {
  const button = "h-[22px] rounded-[2px] border border-[#777] bg-linear-to-b from-[#d8d8d8] to-[#a8a8a8] text-[13px] text-black";
  return (
    <div className="absolute right-[15px] bottom-[15px] flex h-[63px] w-[822px] border-2 border-black bg-linear-to-b from-[#262626] to-[#181818] pl-[22px]">
      <svg viewBox="0 0 34 32" className="mt-[14px] h-8 w-[34px]" aria-hidden="true">
        <path d="M17 2l15 28H2z" fill="#4a4a4a" stroke="#1a1a1a" strokeWidth="2" />
        <path d="M17 12v10M17 24v3" stroke="#fff" strokeWidth="3" />
      </svg>
      <div className="ml-[17px] pt-1.5">
        <p className="text-[18px] leading-[22px] font-light whitespace-nowrap text-[#d8d8d8]">
          2 asset editors were open when the editor quit unexpectedly. Would you like to re-open them?
        </p>
        <div className="mt-[3px] flex gap-1.5">
          <button className={`w-[41px] ${button}`}>Open</button>
          <button className={`w-[51px] ${button}`}>Cancel</button>
        </div>
      </div>
      <div className="absolute top-0 left-[80px] flex gap-[3px]">
        <i className="h-0.5 w-3.5 bg-[#ddd]" />
        <i className="h-0.5 w-3.5 bg-[#ddd]" />
        <i className="h-0.5 w-3.5 bg-[#ddd]" />
        <i className="h-0.5 w-3.5 bg-[#ddd]" />
        <i className="h-0.5 w-3.5 bg-[#1bb31b]" />
        <i className="mx-1.5 h-0.5 w-1.5 bg-[#999]" />
        <i className="h-0.5 w-3.5 bg-[#1bb31b]" />
        <i className="h-0.5 w-3.5 bg-[#1bb31b]" />
        <i className="h-0.5 w-3.5 bg-[#1bb31b]" />
      </div>
    </div>
  );
}

function ShareBar() {
  return (
    <div className="absolute bottom-[45px] left-1/2 flex h-[46px] w-[443px] -translate-x-1/2 items-center bg-[#f7f7f7] pl-2.5 font-['Open_Sans',sans-serif] text-[12px] text-[#222] shadow-[0_2px_10px_rgba(0,0,0,0.5)]">
      <div className="flex gap-0.5">
        <i className="h-[13px] w-[3px] bg-[#c8c8c8]" />
        <i className="h-[13px] w-[3px] bg-[#c8c8c8]" />
      </div>
      <span className="ml-[11px] whitespace-nowrap">meet.google.com is sharing your screen.</span>
      <div className="ml-auto flex items-center pr-[14px]">
        <button className="h-9 w-28 rounded-[2px] bg-[#0074d4] font-semibold whitespace-nowrap text-white">Stop sharing</button>
        <a href="#hide" className="ml-[13px] text-[13px] text-[#1a6fc4] underline">
          Hide
        </a>
      </div>
    </div>
  );
}

function PhysxOverlay() {
  return (
    <div className="pointer-events-none absolute top-[25px] left-[217px] flex items-center font-['DejaVu_Sans',sans-serif] text-[38px] leading-[48px] font-bold text-white/60">
      <span className="flex">
        {["P", "H", "Y", "S"].map((c) => (
          <span key={c} className="w-10 text-center">
            {c}
          </span>
        ))}
        <span className="w-10 text-center text-[#0c9a0c]">X</span>
      </span>
      <span className="flex w-[47px] justify-center text-[24px]">▸</span>
      <span className="flex text-[#0c9a0c]">
        {["C", "P", "U"].map((c) => (
          <span key={c} className="w-10 text-center">
            {c}
          </span>
        ))}
      </span>
    </div>
  );
}

/* ---------- taskbar ---------- */

function TaskItem({ label, running = false, active = false, children }: { label: string; running?: boolean; active?: boolean; children: React.ReactNode }) {
  return (
    <button aria-label={label} className={`relative flex h-full w-[54px] items-center justify-center ${active ? "bg-[#4c5a63]" : ""}`}>
      {children}
      {running && <span className={`absolute bottom-0 h-[3px] bg-[#76b9ed] ${active ? "w-full" : "w-[45px]"}`} />}
    </button>
  );
}

function Taskbar() {
  return (
    <footer className="flex h-[43px] shrink-0 items-stretch bg-linear-to-r from-[#21343c] via-[#20333f] to-[#1b2645] font-['Noto_Sans',sans-serif] text-white">
      <button aria-label="Start" className="flex w-[53px] items-center justify-center">
        <svg viewBox="0 0 16 16" className="h-4 w-4" aria-hidden="true">
          <path d="M0 2.200L6.500 1.300v6.300H0zM7.300 1.200L16 0v7.600H7.300zM0 8.400h6.500v6.300L0 13.800zM7.300 8.400H16V16l-8.700-1.200z" fill="#fff" />
        </svg>
      </button>
      <label className="flex w-[380px] items-center border border-[#c0c0c0] bg-[#f2f2f2] pl-3">
        <svg viewBox="0 0 21 20" className="h-5 w-[21px]" aria-hidden="true">
          <circle cx="13" cy="7" r="6.200" fill="none" stroke="#1a1a1a" strokeWidth="1.600" />
          <path d="M8.500 11.500L1 19" stroke="#1a1a1a" strokeWidth="1.600" />
        </svg>
        <input
          aria-label="Type here to search"
          placeholder="Type here to search"
          className="ml-[14px] w-0 flex-1 bg-transparent text-[16px] outline-none placeholder:text-[#333]"
        />
      </label>
      <TaskItem label="Cortana">
        <svg viewBox="0 0 20 20" className="h-5 w-5">
          <circle cx="10" cy="10" r="8.500" fill="none" stroke="#fff" strokeWidth="2.400" />
        </svg>
      </TaskItem>
      <TaskItem label="Task View">
        <svg viewBox="0 0 22 20" className="h-5 w-[22px]" fill="none" stroke="#fff" strokeWidth="1.300">
          <path d="M2 0v4h12V0M2 20v-4h12v4M2 6.500h12v7H2zM19 0v6M19 10v10" />
          <path d="M18 6.500h3v3h-3z" fill="#fff" stroke="none" />
        </svg>
      </TaskItem>
      <TaskItem label="Microsoft Edge" running>
        <svg viewBox="0 0 28 28" className="h-7 w-7">
          <defs>
            <linearGradient id="edge" x1="0" y1="0" x2="1" y2="0.4">
              <stop offset="0.2" stopColor="#2aa7e6" />
              <stop offset="0.9" stopColor="#5fe06a" />
            </linearGradient>
          </defs>
          <circle cx="14" cy="14" r="13.500" fill="#0f66c4" />
          <path d="M1 12C2 5 8 .5 14.500.5 22 .5 27.500 6 27.500 12.500c0 5-4 7-8 7-3.500 0-4.500-1.500-3.500-3 2-4-1-7.500-6-7.500-4 0-7 1-9 3z" fill="url(#edge)" />
          <path d="M10 11c-4 5-1 12 5 14 4 1 8-1 10.500-4-4 2-9 2-12-2-2-3-2-6-3.500-8z" fill="#0a4a93" />
          <path d="M16 16.500c-1 2 0 3 3.500 3 2.500 0 5-.8 6.500-2.500l2 4-4 2c-5 1-10-1-10.500-5z" fill="#20343e" />
        </svg>
      </TaskItem>
      <TaskItem label="File Explorer">
        <svg viewBox="0 0 24 20" className="h-5 w-6">
          <path d="M0 0h9l2 3H0z" fill="#d99a1d" />
          <path d="M0 3h24v16H0z" fill="#fbd25f" />
          <path d="M4 11c0-1 1-1 1-1h14s1 0 1 1v9h-4v-5H8v5H4z" fill="#3c97dd" />
        </svg>
      </TaskItem>
      <TaskItem label="Microsoft Store">
        <svg viewBox="0 0 26 26" className="h-[26px] w-[26px]">
          <path d="M9 8V4c0-4 8-4 8 0v4" fill="none" stroke="#ddd" strokeWidth="1.500" />
          <path d="M0 7h26v17c0 1-1 2-2 2H2c-1 0-2-1-2-2z" fill="#fff" />
          <path d="M7 11h5.500v5.500H7z" fill="#f25022" />
          <path d="M13.500 11H19v5.500h-5.500z" fill="#7fba00" />
          <path d="M7 17.500h5.500V23H7z" fill="#00a4ef" />
          <path d="M13.500 17.500H19V23h-5.500z" fill="#ffb900" />
        </svg>
      </TaskItem>
      <TaskItem label="Mail">
        <svg viewBox="0 0 28 22" className="h-[22px] w-7">
          <path d="M0 8L14 0l14 8v14H0z" fill="#fff" />
          <path d="M2 8h24l-11 7 6 4-7-3z" fill="#20343e" />
        </svg>
      </TaskItem>
      <TaskItem label="Spotify" running>
        <span className="flex h-[26px] w-[26px] rounded-full bg-[#13232b]">
          <SiSpotify className="h-full w-full text-[#1ed760]" />
        </span>
      </TaskItem>
      <TaskItem label="Window" running>
        <svg viewBox="0 0 26 22" className="h-[22px] w-[26px]">
          <path d="M0 0h26v22H0z" fill="#dfe3e6" />
          <path d="M1 1h24v2H1z" fill="#f8f8f8" />
          <path d="M3 5h10v14H3z" fill="#4f9a80" />
          <path d="M3 13L13 5v7l-8 7H3z" fill="#3d7fae" />
          <path d="M16 5h4v14h-4z" fill="#fff" />
          <path d="M22 4h2v8h-2z" fill="#4a86c5" />
        </svg>
      </TaskItem>
      <TaskItem label="Discord" running>
        <span className="flex h-[27px] w-[27px] items-center justify-center rounded-full bg-[#5865f2]">
          <SiDiscord className="h-4 w-4 text-white" />
        </span>
        <span className="absolute right-[11px] bottom-1.5 flex h-[14px] w-[14px] items-center justify-center rounded-full bg-[#ed4f52] text-[11px] leading-none">2</span>
      </TaskItem>
      <TaskItem label="Unreal Editor" running active>
        <span className="flex h-[25px] w-[25px] items-center justify-center rounded-full border border-[#d8d8d8] bg-[#1c1a19]">
          <UnrealU className="h-[17px] w-[18px] text-white" />
        </span>
      </TaskItem>
      <TaskItem label="Photos" running>
        <svg viewBox="0 0 28 26" className="h-[26px] w-7">
          <path d="M3 1C14-1 27 3 27 14c0 7-6 12-12.500 12S2 21 2 14.500C2 11 3 9 5 7" fill="#fff" />
          <path d="M3 4c10-1 19 1 21 10l-5-4-4 7-3-2-7 8C1 17 2 9 7 6z" fill="#20343e" />
          <path d="M4 20l7-10 2 4-6 8zM15 17l4-7 5 6-2 4z" fill="#fff" />
          <circle cx="9" cy="8" r="1.400" fill="#fff" />
        </svg>
      </TaskItem>
      <div className="ml-auto flex items-center text-[13px]">
        <button aria-label="Show hidden icons">
          <svg viewBox="0 0 12 8" className="h-2 w-3">
            <path d="M1 7l5-5 5 5" fill="none" stroke="#fff" strokeWidth="1.500" />
          </svg>
        </button>
        <svg viewBox="0 0 18 16" className="ml-[7px] h-4 w-[18px]" fill="none" stroke="#fff" strokeWidth="1.300" aria-hidden="true">
          <path d="M5 3h12v9H5M11 12v3M7 15h8M1 1h5v4H1zM3 5v10" />
        </svg>
        <div className="ml-8 text-center leading-5">
          <div>ENG</div>
          <div>IN</div>
        </div>
        <div className="ml-[13px] text-center leading-5">
          <div>6:39 PM</div>
          <div>5/30/2021</div>
        </div>
        <button aria-label="Notifications" className="relative mr-4 ml-[18px] h-7 w-6">
          <svg viewBox="0 0 16 16" className="h-4 w-4" aria-hidden="true">
            <path d="M0 0h16v12H6l-3 4v-4H0z" fill="#fff" />
            <path d="M3 3h10M3 6h10M3 9h7" stroke="#1f2b44" strokeWidth="1.200" />
          </svg>
          <span className="absolute right-0 bottom-0 flex h-[17px] w-[17px] items-center justify-center rounded-full border border-[#999] bg-[#2b2b30] text-[11px]">2</span>
        </button>
        <div className="mr-1 h-[43px] w-px bg-[#6a7180]" />
      </div>
    </footer>
  );
}

export default function App() {
  return (
    <div className="flex h-screen flex-col overflow-hidden font-['Roboto',sans-serif]">
      <Gradients />
      <div className="relative min-h-0 flex-1 overflow-hidden">
        <Desktop />
        <BackWindow />
        <FrontWindow />
        <div className="pointer-events-none absolute -top-3 right-[133px] h-[72px] w-[72px] rounded-full bg-[radial-gradient(circle,rgba(0,70,0,0.15),rgba(10,120,20,0.4))]" />
        <PhysxOverlay />
        <Notification />
        <ShareBar />
      </div>
      <Taskbar />
    </div>
  );
}
